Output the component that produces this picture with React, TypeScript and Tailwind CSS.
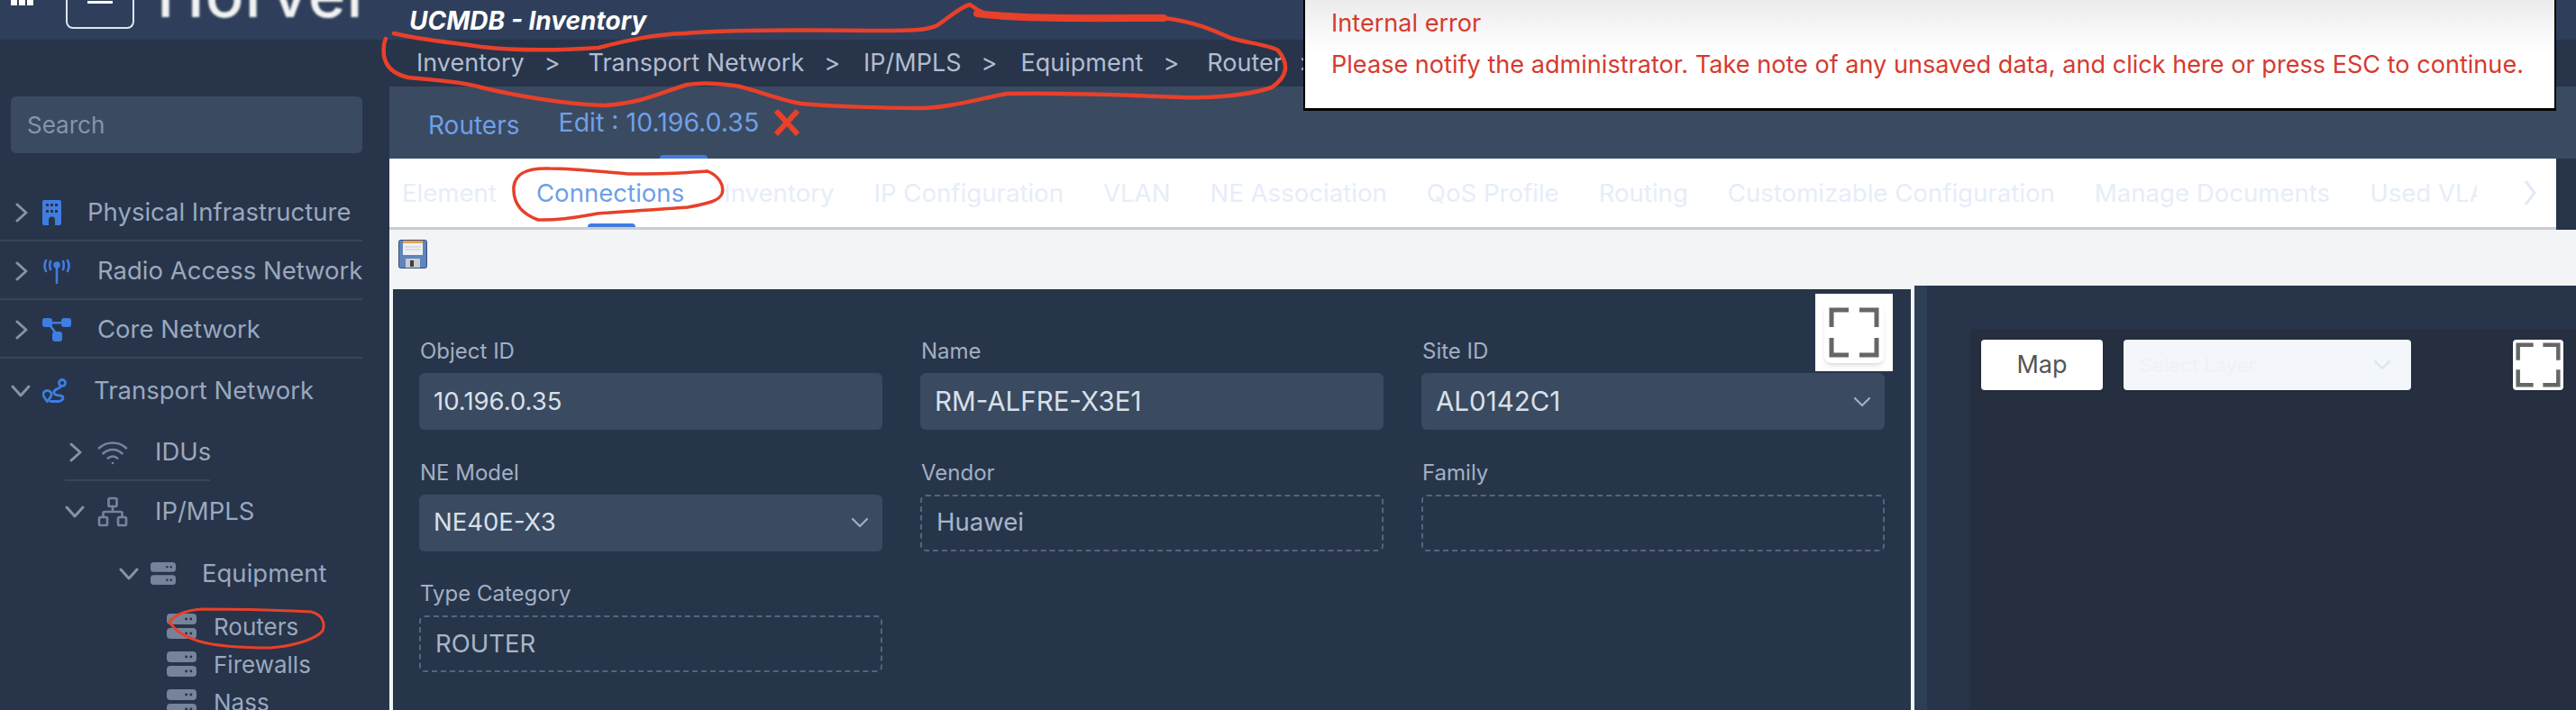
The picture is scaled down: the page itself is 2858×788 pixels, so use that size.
import React from "react";
import { Network, Wifi } from "lucide-react";

const FONT = { fontFamily: "Inter, 'Noto Sans', sans-serif" };

const Chevron = ({ open }: { open?: boolean }) =>
  open ? (
    <svg width="22" height="14" viewBox="0 0 22 14" fill="none" stroke="#8593a8" strokeWidth="3" strokeLinecap="round" strokeLinejoin="round">
      <path d="M2 2 L11 12 L20 2" />
    </svg>
  ) : (
    <svg width="14" height="22" viewBox="0 0 14 22" fill="none" stroke="#8593a8" strokeWidth="3" strokeLinecap="round" strokeLinejoin="round" className="ml-[5px]">
      <path d="M2 2 L12 11 L2 20" />
    </svg>
  );

const BuildingIcon = () => (
  <svg width="21" height="28" viewBox="0 0 21 28" className="shrink-0">
    <path d="M2 0h17a2 2 0 0 1 2 2v24a2 2 0 0 1-2 2h-5v-6a3.5 3.5 0 0 0-7 0v6H2a2 2 0 0 1-2-2V2a2 2 0 0 1 2-2z" fill="#3f7de0" />
    {[4, 9, 14].map((x) =>
      [4, 11].map((y) => <rect key={`${x}${y}`} x={x} y={y} width="3" height="3" fill="#27344a" />)
    )}
  </svg>
);

const AntennaIcon = () => (
  <svg width="32" height="28" viewBox="0 0 32 28" fill="none" stroke="#3f7de0" strokeWidth="2.6" strokeLinecap="round" className="shrink-0">
    <path d="M16 8v19" />
    <circle cx="16" cy="7" r="2.5" fill="#3f7de0" />
    <path d="M4 2c-2 4-2 8 0 12M9 3c-1 3-1 6 0 9M28 2c2 4 2 8 0 12M23 3c1 3 1 6 0 9" />
  </svg>
);

const CoreIcon = () => (
  <svg width="32" height="26" viewBox="0 0 32 26" fill="#3f7de0" className="shrink-0">
    <rect x="0" y="0" width="11" height="10" rx="3" />
    <rect x="21" y="0" width="11" height="10" rx="3" />
    <rect x="11" y="15" width="11" height="11" rx="3" />
    <path d="M8 4h16v2.4H8zM6 7l2-1.8 9 12-2 1.8z" />
  </svg>
);

const RouteIcon = () => (
  <svg width="28" height="28" viewBox="0 0 28 28" fill="none" stroke="#3f7de0" strokeWidth="2.8" strokeLinecap="round" className="shrink-0">
    <path d="M5.500 13.500c-2.800 0-4.500 2-4.500 4.300 0 2.700 4.500 7.700 4.500 7.700s4.500-5 4.500-7.700c0-2.300-1.700-4.300-4.500-4.300z" />
    <circle cx="22" cy="5" r="3.500" />
    <path d="M20 9.500c-1 2-6 2-7 5s2 4 6.500 4.500 5 5-1 6.500H9" />
  </svg>
);

const ServerIcon = ({ w, h }: { w: number; h: number }) => (
  <svg width={w} height={h} viewBox="0 0 32 28" fill="#76849b" className="shrink-0" preserveAspectRatio="none">
    <rect x="0" y="0" width="32" height="12" rx="4" />
    <rect x="0" y="16" width="32" height="12" rx="4" />
    <g fill="#27344a">
      <circle cx="21" cy="6" r="1.400" />
      <circle cx="26" cy="6" r="1.400" />
      <circle cx="21" cy="22" r="1.400" />
      <circle cx="26" cy="22" r="1.400" />
    </g>
  </svg>
);

const SaveIcon = () => (
  <svg width="32" height="32" viewBox="0 0 32 32">
    <rect x="0.500" y="0.500" width="31" height="31" rx="2" fill="#5f85bb" stroke="#33507f" />
    <rect x="5" y="1" width="22" height="3" fill="#e8a24e" />
    <rect x="5" y="4" width="22" height="13" fill="#eef0f4" />
    <path d="M7 8h18M7 11h18" stroke="#c5cad3" />
    <rect x="8" y="21" width="16" height="10" fill="#c9ccd2" />
    <rect x="13" y="23" width="4" height="7" fill="#3d3f45" />
  </svg>
);

const FullscreenCorners = ({ size, stroke }: { size: number; stroke: number }) => (
  <svg width={size} height={size} viewBox="0 0 56 56" fill="none" stroke="#666" strokeWidth={stroke}>
    <path d="M22 3H3v19M34 3h19v19M3 34v19h19M53 34v19H34" />
  </svg>
);

const SelectChevron = ({ color }: { color: string }) => (
  <svg width="20" height="12" viewBox="0 0 20 12" fill="none" stroke={color} strokeWidth="2.200" strokeLinecap="round" strokeLinejoin="round">
    <path d="M2 2l8 8 8-8" />
  </svg>
);

function NavRow({ className, open, icon, label, gap = "ml-[29px]", chevron = true }: {
  className: string; open?: boolean; icon: React.ReactNode; label: string; gap?: string; chevron?: boolean;
}) {
  return (
    <div className={`flex items-center ${className}`}>
      {chevron && <div className="w-[35px] shrink-0 flex items-center"><Chevron open={open} /></div>}
      {icon}
      <span className={`${gap} whitespace-nowrap text-[#9aa8bd]`}>{label}</span>
    </div>
  );
}

function Sidebar() {
  return (
    <div className="w-[432px] shrink-0 bg-[#27344a] text-[27.5px] overflow-hidden">
      <div className="h-[44px] bg-[#2f3f5b] flex items-start overflow-hidden">
        <div className="ml-[12px] flex gap-[2px]">
          <div className="w-[7px] h-[6px] bg-white" />
          <div className="w-[7px] h-[6px] bg-white" />
          <div className="w-[7px] h-[6px] bg-white" />
        </div>
        <div className="ml-[36px] w-[76px] h-[32px] border-2 border-t-0 border-[#dfe5ee] rounded-b-lg flex justify-center">
          <div className="w-[28px] h-[3px] mt-[1px] bg-white" />
        </div>
        <div className="ml-[25px] -mt-[42px] text-[71px] leading-none font-medium text-[#f2f2f2] tracking-[1px] blur-[0.8px]">Horver</div>
      </div>
      <div className="ml-[12px] w-[390px] mt-[63px] h-[63px] rounded-md bg-[#3a4a60] flex items-center pl-[18px] text-[#8695aa] text-[26px]">Search</div>
      <div className="mt-[33px]">
        <NavRow className="pl-[12px] pt-[3px] h-[65px] border-b-2 border-[#37465b] w-[402px]" icon={<BuildingIcon />} label="Physical Infrastructure" />
        <NavRow className="pl-[12px] pt-[3px] h-[65px] border-b-2 border-[#37465b] w-[402px]" icon={<AntennaIcon />} label="Radio Access Network" />
        <NavRow className="pl-[12px] pt-[3px] h-[65px] border-b-2 border-[#37465b] w-[402px]" icon={<CoreIcon />} label="Core Network" />
        <NavRow className="pl-[12px] pt-[3px] h-[68px]" open icon={<RouteIcon />} label="Transport Network" />
        <div className="ml-[72px] w-[161px] border-b-2 border-[#37465b]">
          <NavRow className="h-[66px] pt-[5px]" icon={<Wifi size={36} color="#76849b" strokeWidth={1.800} className="shrink-0" />} label="IDUs" />
        </div>
        <NavRow className="pl-[72px] h-[65px] pt-[3px]" open icon={<Network size={36} color="#76849b" strokeWidth={1.800} className="shrink-0" />} label="IP/MPLS" />
        <NavRow className="pl-[132px] h-[70px] pt-[5px]" open icon={<ServerIcon w={28} h={25} />} label="Equipment" />
        <div className="text-[26px] pt-[5px]">
          {["Routers", "Firewalls", "Nass"].map((t) => (
            <NavRow key={t} className="pl-[185px] h-[42px]" chevron={false} gap="ml-[19px]" icon={<ServerIcon w={33} h={28} />} label={t} />
          ))}
        </div>
      </div>
    </div>
  );
}

const CRUMBS = [
  { label: "Inventory", gap: "" },
  { label: "Transport Network", gap: "ml-[9px]" },
  { label: "IP/MPLS", gap: "ml-[4px]" },
  { label: "Equipment", gap: "ml-[4px]" },
  { label: "Router", gap: "ml-[9px] -mr-[4px]" },
];
const TABS = ["Element", "Connections", "Inventory", "IP Configuration", "VLAN", "NE Association", "QoS Profile", "Routing", "Customizable Configuration", "Manage Documents", "Used VLANs"];

type FieldProps = { label: string; value?: string; kind: "input" | "select" | "readonly"; size?: string };

function Field({ label, value, kind, size = "text-[27.5px]" }: FieldProps) {
  const box = kind === "readonly"
    ? "border-2 border-dashed border-[#56657b] text-[#a9b5c8]"
    : "bg-[#3a4a60] text-[#d9e0ea]";
  return (
    <div>
      <div className="h-[30px] mb-[9px] pl-[1px] text-[24px] leading-[30px] text-[#a2afc3]">{label}</div>
      <div className={`h-[63px] rounded-md flex items-center justify-between pl-[16px] pr-[15px] ${size} ${box}`}>
        <span>{value}</span>
        {kind === "select" && <SelectChevron color="#a2afc3" />}
      </div>
    </div>
  );
}

const FIELDS: FieldProps[] = [
  { label: "Object ID", value: "10.196.0.35", kind: "input" },
  { label: "Name", value: "RM-ALFRE-X3E1", kind: "input", size: "text-[29.5px]" },
  { label: "Site ID", value: "AL0142C1", kind: "select", size: "text-[29.5px]" },
  { label: "NE Model", value: "NE40E-X3", kind: "select" },
  { label: "Vendor", value: "Huawei", kind: "readonly" },
  { label: "Family", kind: "readonly" },
  { label: "Type Category", value: "ROUTER", kind: "readonly" },
];

function Main() {
  return (
    <div className="flex-1 min-w-0 flex flex-col">
      <div className="h-[44px] bg-[#2f3f5b] pl-[22px] flex items-start pt-[2px] shrink-0">
        <span className="text-[28px] font-bold italic text-white whitespace-nowrap">UCMDB - Inventory</span>
      </div>
      <div className="h-[52px] w-[1014px] bg-[#27344a] pl-[30px] flex items-center gap-[22px] text-[27px] text-[#b2bdd0] shrink-0 whitespace-nowrap overflow-hidden">
        {CRUMBS.map((c) => (
          <React.Fragment key={c.label}>
            <span className={c.gap}>{c.label}</span>
            <span>&gt;</span>
          </React.Fragment>
        ))}
      </div>
      <div className="h-[80px] bg-[#3a4a60] pl-[43px] flex items-start pt-[22px] shrink-0 text-[28px] text-[#6f9fe8] whitespace-nowrap">
        <span>Routers</span>
        <div className="relative ml-[43px] flex items-center h-[36px]">
          <span className="text-[28.5px]">Edit : 10.196.0.35</span>
          <svg width="30" height="30" viewBox="0 0 30 30" stroke="#e8402a" strokeWidth="6" className="ml-[16px]">
            <path d="M3 2l24 26M27 2L3 28" />
          </svg>
          <div className="absolute left-[112px] top-[54px] w-[53px] h-[4px] rounded-t bg-[#3f7de0]" />
        </div>
      </div>
      <div className="h-[79px] flex shrink-0">
        <div className="flex-1 min-w-0 bg-white border-b-[3px] border-[#c9ccd2] flex items-center pl-[14px] text-[27.6px] text-[#e6edf9] whitespace-nowrap">
          <div className="flex gap-[44px] w-[2302px] overflow-hidden pt-[2px]">
            {TABS.map((t) => (
              <span key={t} className={t === "Connections" ? "text-[#6f9fe8]" : ""}>{t}</span>
            ))}
          </div>
          <svg width="14" height="30" viewBox="0 0 14 30" fill="none" stroke="#e2eaf7" strokeWidth="3" className="ml-[52px]">
            <path d="M2 2l10 13L2 28" />
          </svg>
        </div>
        <div className="w-[22px] bg-[#27344a]" />
      </div>
      <div className="relative h-[62px] bg-[#f3f4f6] pl-[10px] pt-[11px] shrink-0">
        <div className="absolute left-[220px] -top-[7px] w-[53px] h-[4px] rounded-t bg-[#3f7de0]" />
        <SaveIcon />
      </div>
      <div className="flex-1 flex min-h-0">
        <div className="w-[1692px] shrink-0 bg-[#f3f4f6] pt-[4px] px-[4px]">
          <div className="relative h-full bg-[#27354a] pt-[54px] pl-[29px]">
            <div className="grid grid-cols-3 gap-x-[42px] gap-y-[32.5px] w-[1626px]">
              {FIELDS.map((f) => <Field key={f.label} {...f} />)}
            </div>
            <div className="absolute left-[1578px] top-[5px] w-[86px] h-[86px] bg-white flex items-center justify-center">
              <div className="w-[66px] h-[68px] rounded-lg bg-white shadow-md flex items-center justify-center">
                <FullscreenCorners size={56} stroke={5} />
              </div>
            </div>
          </div>
        </div>
        <div className="w-[14px] shrink-0 bg-[#2e3f55]" />
        <div className="flex-1 min-w-0 bg-[#27344a] pt-[48px] pl-[48px]">
          <div className="h-full bg-[#252f40] pt-[12px] pl-[12px] flex items-start">
            <div className="w-[135px] h-[56px] bg-white rounded shadow flex items-center justify-center text-[27px] text-[#555]">Map</div>
            <div className="ml-[23px] w-[319px] h-[56px] bg-[#f3f6fb] rounded-sm shadow flex items-center justify-between pl-[18px] pr-[22px] text-[22px] text-[#eef2f8]">
              <span>Select Layer</span>
              <SelectChevron color="#dbe4f0" />
            </div>
            <div className="ml-[113px] w-[56px] h-[56px] bg-white rounded flex items-center justify-center shadow">
              <FullscreenCorners size={50} stroke={5} />
            </div>
          </div>
        </div>
      </div>
    </div>
  );
}

export default function App() {
  return (
    <div className="relative flex w-[2858px] h-[788px] overflow-hidden bg-[#27344a]" style={FONT}>
      <Sidebar />
      <Main />

      {/* error popup */}
      <div className="absolute left-[1446px] top-0 w-[1390px] h-[123px] bg-gradient-to-b from-[#ececec] via-white to-white border-x-2 border-b-[3px] border-black pl-[29px] pt-[9px] text-[27.1px] text-[#d63a2f] whitespace-nowrap">
        <div className="h-[46px] leading-[34px]">Internal error</div>
        <div className="leading-[34px]">Please notify the administrator. Take note of any unsaved data, and click here or press ESC to continue.</div>
      </div>

      {/* red marker scribbles on top of the screenshot */}
      <svg width="2858" height="788" viewBox="0 0 2858 788" fill="none" stroke="#e8402a" strokeLinecap="round" strokeLinejoin="round" className="absolute left-0 top-0 pointer-events-none">
        <path strokeWidth="4.500" d="M437 37C470 45 510 48 534 52C570 56 620 56 664 53C695 45 725 38 760 37C810 33 880 33 960 34C1010 34 1029 34 1040 28C1052 20 1065 8 1076 5C1085 12 1095 18 1110 19C1170 20 1240 18 1291 20C1325 24 1345 33 1365 42C1385 48 1410 50 1418 56C1431 72 1428 85 1411 97C1385 106 1345 109 1311 108C1240 105 1170 103 1117 104C1085 110 1050 120 1023 120C980 120 920 118 889 115C860 110 835 98 815 95C795 92 775 92 762 94C735 102 715 114 670 117C630 116 570 106 534 97C510 90 475 88 453 86C435 82 428 73 426 62C425 52 426 47 428 43" />
        <path strokeWidth="8" d="M1084 15C1140 22 1230 20 1291 20" />
        <path strokeWidth="3.500" d="M785 190C750 193 720 193 697 193C670 191 640 187 610 187C585 186 572 192 570 207C569 222 575 236 597 244C625 245 645 240 663 237C700 234 740 232 763 230C785 226 798 223 801 215C804 205 797 195 785 190" />
        <path strokeWidth="3" d="M188 690C195 682 205 677 225 676C265 676 310 677 345 679C358 682 361 692 358 700C350 710 325 717 300 719C270 719 240 717 222 712C205 707 193 699 188 690" />
      </svg>
    </div>
  );
}
